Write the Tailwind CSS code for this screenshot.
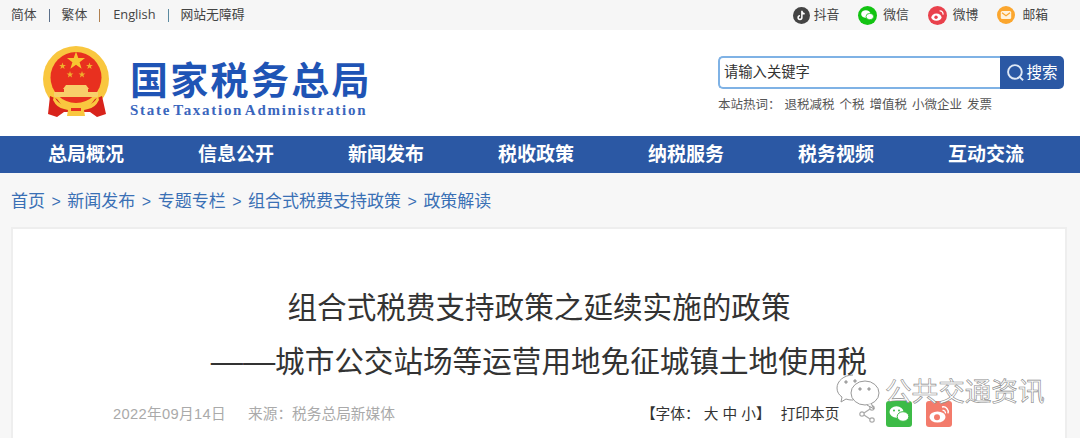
<!doctype html>
<html lang="zh"><head><meta charset="utf-8"><script src="https://cdn.jsdelivr.net/npm/@tailwindcss/browser@4"></script></head>
<body class="w-[1080px] h-[438px] overflow-hidden bg-[#f7f7f7] relative font-['Liberation_Sans','Noto_Sans_CJK_SC',sans-serif] text-[#333]">
<div class="h-[30px] bg-[#f6f6f6] flex items-center text-[12.8px] text-[#444]">
  <div class="flex items-center pl-[11px]">
    <span>简体</span><i class="w-px h-[13px] bg-[#5b6f8a] ml-[12px] mr-[12px]"></i>
    <span>繁体</span><i class="w-px h-[13px] bg-[#b08050] ml-[12px] mr-[13px]"></i>
    <span class="font-['Open_Sans']">English</span><i class="w-px h-[13px] bg-[#5b8aa0] ml-[12px] mr-[12px]"></i>
    <span>网站无障碍</span>
  </div>
  <div class="ml-auto flex items-center pr-[32px]">
    <svg class="w-[17px] h-[17px] mr-[4px]" viewBox="0 0 18 18"><circle cx="9" cy="9" r="9" fill="#444"/><path d="M9.4 4v7.2a2 2 0 1 1-2-2M9.4 4.4c.3 1.6 1.4 2.6 3 2.8" fill="none" stroke="#fff" stroke-width="1.6"/></svg><span>抖音</span>
    <svg class="w-[19px] h-[19px] ml-[19px] mr-[6px]" viewBox="0 0 18 18"><circle cx="9" cy="9" r="9" fill="#12c312"/><ellipse cx="7.4" cy="7.6" rx="4.4" ry="3.6" fill="#fff"/><ellipse cx="11.2" cy="10" rx="3.6" ry="3" fill="#fff" stroke="#12c312" stroke-width=".7"/></svg><span>微信</span>
    <svg class="w-[19px] h-[19px] ml-[19px] mr-[6px]" viewBox="0 0 18 18"><circle cx="9" cy="9" r="9" fill="#e9414c"/><ellipse cx="8" cy="10.6" rx="4.8" ry="3.4" fill="#fff"/><circle cx="7.6" cy="10.7" r="1.6" fill="#e9414c"/><path d="M11 4.6a3 3 0 0 1 3.2 3.6" fill="none" stroke="#fff" stroke-width="1.2"/></svg><span>微博</span>
    <svg class="w-[18px] h-[18px] ml-[19px] mr-[7px]" viewBox="0 0 18 18"><circle cx="9" cy="9" r="9" fill="#fba62e"/><rect x="3.8" y="5" width="10.4" height="8" rx="1.6" fill="#fff3dc"/><path d="M5 6.8l4 3 4-3" fill="none" stroke="#fba62e" stroke-width="1.2"/></svg><span>邮箱</span>
  </div>
</div>
<header class="h-[106px] bg-white flex">
  <div class="flex items-start pl-[42px] pt-[16px]">
    <svg class="w-[69px] h-[72px]" viewBox="0 0 69 72">
      <defs><polygon id="s" points="0,-10 2.4,-3.1 9.5,-3.1 3.8,1.2 5.9,8.1 0,3.9 -5.9,8.1 -3.8,1.2 -9.5,-3.1 -2.4,-3.1"/></defs>
      <circle cx="34" cy="33" r="33" fill="#f9c73f"/>
      <circle cx="34" cy="31.5" r="25.5" fill="#e8301f"/>
      <use href="#s" fill="#f7c531" transform="translate(34 15) scale(.95)"/>
      <use href="#s" fill="#efb02c" transform="translate(20.5 20) scale(.36)"/>
      <use href="#s" fill="#efb02c" transform="translate(47.5 20) scale(.36)"/>
      <use href="#s" fill="#efb02c" transform="translate(28 28.5) scale(.36)"/>
      <use href="#s" fill="#efb02c" transform="translate(40 28.5) scale(.36)"/>
      <path d="M24 39h20l3 4H21zM22 43h24v3H22zM12 46h44v5H12z" fill="#f8cf6a"/>
      <path d="M8 50l7 3 6 8 13 3 13-3 6-8 7-3 4 18-9 3-7-5H22l-7 5-9-3z" fill="#d8231b"/>
      <path d="M12 50q4 8 10 9t12-1q6 2 12 1t10-9l1 4q-4 8-11 9l-4 1 1 6H25l1-6-4-1q-7-1-11-9z" fill="#f9c73f"/>
      <path d="M29 62h10v3H29z" fill="#e8301f"/>
    </svg>
    <div class="ml-[19px] pt-[14px] flex flex-col">
      <div class="text-[38px] leading-[42px] font-bold text-[#1f54b5] tracking-[2.3px] whitespace-nowrap">国家税务总局</div>
      <div class="font-['Liberation_Serif'] text-[15px] leading-[17px] font-bold text-[#3a66bd] tracking-[1.72px] [word-spacing:-3px] whitespace-nowrap">State Taxation Administration</div>
    </div>
  </div>
  <div class="ml-auto w-[346px] mr-[16px] pt-[26px]">
    <div class="flex h-[33px]">
      <div class="flex-1 border-2 border-r-0 border-[#7fb2e5] rounded-l-[5px] pl-[4px] text-[14.3px] leading-[29px] text-[#333]">请输入关键字</div>
      <div class="w-[64px] bg-[#2b58a4] rounded-r-[5px] flex items-center justify-center text-white text-[15.5px]">
        <svg class="w-[19px] h-[19px] mr-[1px]" viewBox="0 0 20 20" fill="none" stroke="#dfe8f5" stroke-width="2"><circle cx="9.4" cy="9.4" r="7.2"/><path d="M14.6 14.8l3.4 3.4"/></svg>搜索
      </div>
    </div>
    <div class="mt-[8px] flex text-[12.5px] leading-[16px] text-[#555] whitespace-nowrap"><span class="mr-[4px]">本站热词：</span><span class="mr-[5px]">退税减税</span><span class="mr-[5px]">个税</span><span class="mr-[5px]">增值税</span><span class="mr-[5px]">小微企业</span><span>发票</span></div>
  </div>
</header>
<nav class="h-[37px] bg-[#2b58a4] flex pl-[11px] text-white text-[19px] font-bold leading-[37px]">
  <a class="w-[150px] text-center">总局概况</a><a class="w-[150px] text-center">信息公开</a><a class="w-[150px] text-center">新闻发布</a><a class="w-[150px] text-center">税收政策</a><a class="w-[150px] text-center">纳税服务</a><a class="w-[150px] text-center">税务视频</a><a class="w-[150px] text-center">互动交流</a>
</nav>
<div class="h-[54px] flex items-center pl-[11px] pt-[3px] text-[17px] text-[#3a70b5] whitespace-nowrap">
  <span>首页</span><span class="mx-[6.5px] text-[16px]">&gt;</span><span>新闻发布</span><span class="mx-[6.5px] text-[16px]">&gt;</span><span>专题专栏</span><span class="mx-[6.5px] text-[16px]">&gt;</span><span>组合式税费支持政策</span><span class="mx-[6.5px] text-[16px]">&gt;</span><span>政策解读</span>
</div>
<main class="ml-[11px] w-[1056px] h-[211px] bg-white border-2 border-b-0 border-[#eeeeee] pt-[52px]">
  <h1 class="text-center text-[29.6px] leading-[54px] text-[#333] font-normal">组合式税费支持政策之延续实施的政策<br><span class="inline-block w-[64px] text-center scale-x-[1.09]">——</span>城市公交站场等运营用地免征城镇土地使用税</h1>
  <div class="flex items-center mt-[12px] h-[26px] pl-[100px] text-[14.7px] text-[#aaa] whitespace-nowrap">
    <span class="w-[135px] tracking-[0.32px]">2022年09月14日</span><span>来源：税务总局新媒体</span>
    <span class="ml-[246px] text-[#333]">【字体：&nbsp;大 中 小】</span><span class="ml-[10px] text-[#333]">打印本页</span>
    <svg class="w-[16px] h-[18px] ml-[20px] " viewBox="0 0 16 18" fill="none" stroke="#aaa" stroke-width="1.2"><circle cx="3" cy="9" r="2.2"/><circle cx="13" cy="3" r="2.2"/><circle cx="13" cy="15" r="2.2"/><path d="M5 8l6-4M5 10l6 4"/></svg>
    <svg class="w-[26px] h-[26px] ml-[11px]" viewBox="0 0 26 26"><rect width="26" height="26" rx="3" fill="#3dbb47"/><ellipse cx="10.5" cy="11" rx="7" ry="5.8" fill="#fff"/><ellipse cx="17" cy="15.5" rx="5.8" ry="4.8" fill="#fff" stroke="#3dbb47"/><circle cx="8" cy="9.5" r="1" fill="#3dbb47"/><circle cx="13" cy="9.5" r="1" fill="#3dbb47"/></svg>
    <svg class="w-[26px] h-[26px] ml-[14px]" viewBox="0 0 26 26"><rect width="26" height="26" rx="3" fill="#f37b6b"/><ellipse cx="11.5" cy="16" rx="8" ry="5.6" fill="#fff"/><circle cx="11" cy="16.2" r="3" fill="#f37b6b"/><path d="M16 6a5 5 0 0 1 6 6.4M16.5 9.4a2.4 2.4 0 0 1 2.8 3" fill="none" stroke="#fff" stroke-width="1.4"/></svg>
  </div>
</main>
<div class="absolute left-[835px] top-[373px] flex items-center">
  <svg class="w-[46px] h-[40px]" viewBox="0 0 46 40" fill="#fff" fill-opacity=".75" stroke="#999" stroke-width="1"><path d="M18 2C9 2 2 8 2 15c0 4 2 7 5 9l-1 5 5-3c3 1 5 1 7 1"/><ellipse cx="30" cy="20" rx="14" ry="12"/><path d="M36 30l3 6-7-4"/><circle cx="25" cy="16" r="1.2" fill="#999"/><circle cx="34" cy="16" r="1.2" fill="#999"/><circle cx="11" cy="9" r="1.2" fill="#999"/><circle cx="20" cy="8" r="1.2" fill="#999"/></svg>
  <span class="ml-[4px] text-[26.6px] text-[#fff] [-webkit-text-stroke:0.6px_#888] whitespace-nowrap">公共交通资讯</span>
</div>
</body></html>
